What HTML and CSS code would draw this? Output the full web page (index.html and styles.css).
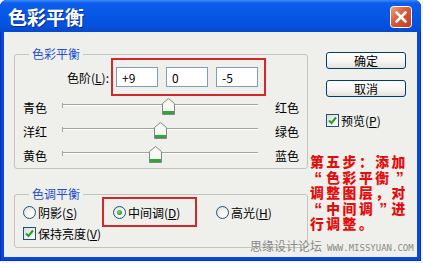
FILE: index.html
```html
<!DOCTYPE html>
<html lang="zh-CN">
<head>
<meta charset="utf-8">
<title>色彩平衡</title>
<link rel="stylesheet" href="styles.css">
</head>
<body>
<div class="window">
  <div class="titlebar">
    <span class="title">色彩平衡</span>
    <span class="close">
      <svg width="22" height="22" viewBox="0 0 22 22">
        <defs>
          <linearGradient id="cg" x1="0" y1="0" x2="1" y2="1">
            <stop offset="0" stop-color="#f0a080"/>
            <stop offset="0.45" stop-color="#dc5a37"/>
            <stop offset="1" stop-color="#c23a1c"/>
          </linearGradient>
        </defs>
        <rect x="0.5" y="0.5" width="21" height="21" rx="3" fill="url(#cg)" stroke="#ffffff"/>
        <path d="M6.5 6.5 L15.5 15.5 M15.5 6.5 L6.5 15.5" stroke="#ffffff" stroke-width="2.6" stroke-linecap="round"/>
      </svg>
    </span>
  </div>
  <div class="client">
    <div class="main">
      <fieldset class="group g1">
        <legend>色彩平衡</legend>
        <div class="levels">
          <span class="lvl-label">色阶(<u>L</u>):</span>
          <div class="redbox inputs">
            <input class="field" type="text" value="+9">
            <input class="field" type="text" value="0">
            <input class="field" type="text" value="-5">
          </div>
        </div>
        <div class="sliders">
          <div class="srow">
            <span class="sl">青色</span>
            <div class="track"><span class="thumb" style="left:100px"><svg width="13" height="17" viewBox="0 0 13 17"><path d="M0.5 5.5 L6.5 0.5 L12.5 5.5 V16.5 H0.5 Z" fill="#f7f7f3" stroke="#7d8a7d"/><rect x="1" y="13" width="11" height="3" fill="#2fa63a"/></svg></span></div>
            <span class="sr">红色</span>
          </div>
          <div class="srow">
            <span class="sl">洋红</span>
            <div class="track"><span class="thumb" style="left:92px"><svg width="13" height="17" viewBox="0 0 13 17"><path d="M0.5 5.5 L6.5 0.5 L12.5 5.5 V16.5 H0.5 Z" fill="#f7f7f3" stroke="#7d8a7d"/><rect x="1" y="13" width="11" height="3" fill="#2fa63a"/></svg></span></div>
            <span class="sr">绿色</span>
          </div>
          <div class="srow">
            <span class="sl">黄色</span>
            <div class="track"><span class="thumb" style="left:87px"><svg width="13" height="17" viewBox="0 0 13 17"><path d="M0.5 5.5 L6.5 0.5 L12.5 5.5 V16.5 H0.5 Z" fill="#f7f7f3" stroke="#7d8a7d"/><rect x="1" y="13" width="11" height="3" fill="#2fa63a"/></svg></span></div>
            <span class="sr">蓝色</span>
          </div>
        </div>
      </fieldset>
      <fieldset class="group g2">
        <legend>色调平衡</legend>
        <div class="tones">
          <label class="opt o1"><span class="radio"></span>阴影(<u>S</u>)</label>
          <label class="opt o2 redbox"><span class="radio on"></span>中间调(<u>D</u>)</label>
          <label class="opt o3"><span class="radio"></span>高光(<u>H</u>)</label>
        </div>
        <label class="opt keep"><span class="check"><svg width="11" height="11" viewBox="0 0 11 11"><path d="M2 5.5 L4.5 8 L9 2.5" fill="none" stroke="#21a121" stroke-width="2"/></svg></span>保持亮度(<u>V</u>)</label>
      </fieldset>
    </div>
    <div class="side">
      <button class="btn ok">确定</button>
      <button class="btn">取消</button>
      <label class="opt preview"><span class="check"><svg width="11" height="11" viewBox="0 0 11 11"><path d="M2 5.5 L4.5 8 L9 2.5" fill="none" stroke="#21a121" stroke-width="2"/></svg></span>预览(<u>P</u>)</label>
      <p class="note">第五步：添加<br><span class="q">“</span>色彩平衡<span class="q">”</span><br>调整图层，对<br><span class="q">“</span>中间调<span class="q">”</span>进<br>行调整。</p>
    </div>
    <div class="watermark">思缘设计论坛<span class="url">WWW.MISSYUAN.COM</span></div>
  </div>
</div>
</body>
</html>
```

FILE: styles.css
```css
* { box-sizing: border-box; }
html, body { margin: 0; padding: 0; background: #f4f4f2; }
body {
  font-family: "Noto Sans CJK SC", "Noto Sans", sans-serif;
  font-size: 12px;
  color: #000;
}
u { text-decoration: underline; text-underline-offset: 1px; }

.window {
  width: 421px;
  height: 261px;
  display: flex;
  flex-direction: column;
  background: #0a48d8;
  border-radius: 7px 7px 0 0;
  box-shadow: inset 1px 0 0 #0630b8, inset -1px 0 0 #0630b8, inset 0 -1px 0 #0630b8;
  overflow: hidden;
}

.titlebar {
  height: 32px;
  flex: none;
  display: flex;
  align-items: center;
  justify-content: space-between;
  padding: 2px 9px 0 8px;
  background: linear-gradient(#3c8cf8 0, #0d5fea 3px, #0658e6 40%, #0452de 80%, #0748cc 100%);
}
.title {
  color: #fff;
  font-weight: bold;
  font-size: 19px;
  line-height: 22px;
  text-shadow: 1px 1px 0 #0a2a9a;
}
.close { width: 22px; height: 22px; display: block; }
.close svg { display: block; }

.client {
  flex: 1;
  margin: 0 4px 4px 4px;
  background: #efefec;
  display: flex;
  gap: 2px;
  padding: 16px 0 0 10px;
  position: relative;
}

.main {
  width: 294px;
  flex: none;
  display: flex;
  flex-direction: column;
}

.group {
  margin: 0;
  padding: 0;
  min-width: 0;
  border: 1px solid #c4c4bc;
  border-radius: 3px;
}
.group legend {
  margin-left: 14px;
  padding: 0 3px;
  font-size: 12px;
  line-height: 12px;
  color: #1e4fcf;
}

.levels {
  display: flex;
  align-items: center;
  margin-top: -2px;
}
.lvl-label {
  width: 96px;
  text-align: right;
  padding-right: 2px;
}
.redbox { border: 2px solid #d0282b; }
.inputs {
  display: flex;
  gap: 8px;
  padding: 7px 6px 7px 3px;
}
.field {
  width: 42px;
  height: 20px;
  margin: 0;
  border: 1px solid #7f9db9;
  background: #fff;
  font: inherit;
  font-size: 12px;
  padding: 0 0 0 5px;
  color: #000;
}

.sliders { display: flex; flex-direction: column; }
.srow {
  height: 24px;
  display: flex;
  align-items: flex-start;
  padding-left: 8px;
  line-height: 24px;
}
.sl { width: 39px; }
.track {
  position: relative;
  width: 196px;
  height: 2px;
  margin-top: 8px;
  border-top: 1px solid #a3a3a0;
  border-bottom: 1px solid #ffffff;
  background: #d4d4d0;
}
.track::before {
  content: "";
  position: absolute;
  left: 0;
  top: -2px;
  width: 1px;
  height: 5px;
  background: #a3a3a0;
}
.thumb {
  position: absolute;
  top: -7px;
  width: 13px;
  height: 17px;
}
.thumb svg { display: block; }
.sr { margin-left: 17px; }

.g2 { margin-top: 19px; padding-bottom: 7px; }
.tones {
  display: flex;
  align-items: center;
  margin-top: -3px;
}
.opt {
  display: flex;
  align-items: center;
  line-height: 13px;
  white-space: nowrap;
}
.o1 { width: 87px; padding-left: 8px; }
.o2 { width: 95px; height: 30px; padding-left: 9px; }
.o3 { margin-left: 19px; }
.keep { height: 13px; padding-left: 8px; }

.radio {
  width: 13px;
  height: 13px;
  flex: none;
  border: 1px solid #1c5180;
  border-radius: 50%;
  background: radial-gradient(circle at 65% 65%, #ffffff 0, #f2f2ee 45%, #d8d8d0 100%);
  margin-right: 2px;
  position: relative;
}
.radio.on::after {
  content: "";
  position: absolute;
  left: 3px;
  top: 3px;
  width: 5px;
  height: 5px;
  border-radius: 50%;
  background: radial-gradient(circle at 40% 40%, #7ee07a 0, #2ba12b 60%, #1c801c 100%);
}
.check {
  width: 13px;
  height: 13px;
  flex: none;
  border: 1px solid #1c5180;
  background: linear-gradient(135deg, #dcdcd6, #ffffff);
  margin-right: 2px;
}
.check svg { display: block; }

.side {
  flex: 1;
  display: flex;
  flex-direction: column;
  align-items: flex-start;
}
.btn {
  width: 80px;
  height: 17px;
  margin: 4px 0 0 16px;
  padding: 0;
  border: 1px solid #003c74;
  border-radius: 3px;
  background: linear-gradient(#ffffff 0, #f4f4f0 60%, #e3e1da 100%);
  font: inherit;
  font-size: 12px;
  line-height: 14px;
  color: #000;
}
.btn + .btn { margin-top: 11px; }
.preview { margin: 17px 0 0 16px; }

.note {
  margin: 28px 0 0 0;
  font-family: "Liberation Sans", "Noto Sans CJK SC", sans-serif;
  color: #e40d0d;
  font-weight: 900;
  font-size: 13.8px;
  line-height: 15.5px;
  letter-spacing: 2.5px;
  white-space: nowrap;
}
.note .q {
  display: inline-block;
  width: 16.3px;
  letter-spacing: 0;
  text-align: center;
  font-size: 16px;
  line-height: 15.5px;
  height: 15.5px;
  overflow: hidden;
  vertical-align: top;
}

.watermark {
  position: absolute;
  left: 246px;
  top: 208px;
  color: #8a8a8a;
  font-size: 12px;
  line-height: 12px;
  white-space: nowrap;
}
.url {
  margin-left: 5px;
  font-family: "DejaVu Sans Mono", monospace;
  font-size: 9px;
}
```
